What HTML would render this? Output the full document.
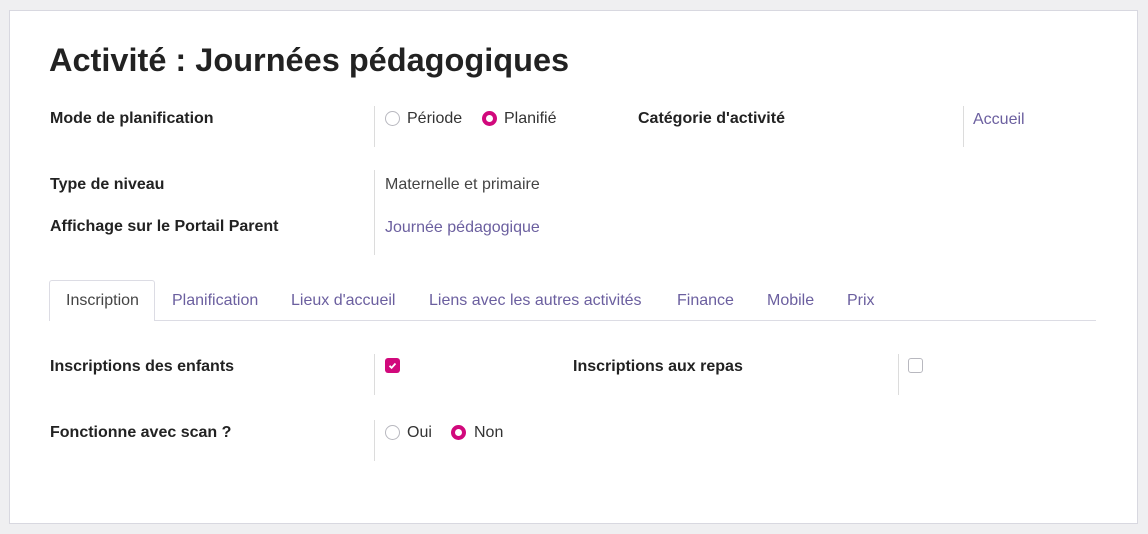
<!DOCTYPE html>
<html><head><meta charset="utf-8"><style>
*{margin:0;padding:0;box-sizing:border-box}
body{width:1148px;height:534px;background:#efeff1;font-family:"Liberation Sans",sans-serif;position:relative;overflow:hidden;color:#222}
.card{position:absolute;left:9px;top:10px;width:1129px;height:514px;background:#fff;border:1px solid #d8d8e0}
.a{position:absolute;white-space:nowrap}
.t{font-size:32.5px;font-weight:bold;color:#222}
.l{font-size:16px;font-weight:bold;color:#222}
.v{font-size:16px;color:#444}
.lk{font-size:16px;color:#6b5f9f}
.sep{position:absolute;width:1px;background:#dcdcdc}
.r{position:absolute;width:15px;height:15px;border-radius:50%;border:1px solid #b8b8bf;background:#fff}
.r.on{border:4px solid #d1097c}
.tab{font-size:16px;color:#6b5f9f}
</style></head><body>
<div class="card"></div>
<div class="a t" style="left:49px;top:42px">Activité : Journées pédagogiques</div>

<div class="a l" style="left:50px;top:110px">Mode de planification</div>
<div class="sep" style="left:374px;top:106px;height:41px"></div>
<div class="r" style="left:385px;top:111px"></div>
<div class="a v" style="left:407px;top:110px;color:#333">Période</div>
<div class="r on" style="left:482px;top:111px"></div>
<div class="a v" style="left:504px;top:110px;color:#333">Planifié</div>
<div class="a l" style="left:638px;top:110px">Catégorie d'activité</div>
<div class="sep" style="left:963px;top:106px;height:41px"></div>
<div class="a lk" style="left:973px;top:111px">Accueil</div>

<div class="a l" style="left:50px;top:176px">Type de niveau</div>
<div class="sep" style="left:374px;top:170px;height:85px"></div>
<div class="a v" style="left:385px;top:176px">Maternelle et primaire</div>
<div class="a l" style="left:50px;top:218px">Affichage sur le Portail Parent</div>
<div class="a lk" style="left:385px;top:219px">Journée pédagogique</div>

<div style="position:absolute;left:49px;top:320px;width:1047px;height:1px;background:#dcdce4"></div>
<div style="position:absolute;left:49px;top:280px;width:106px;height:41px;background:#fff;border:1px solid #dcdce4;border-bottom:none;border-radius:3px 3px 0 0"></div>
<div class="a tab" style="left:66px;top:292px;color:#444">Inscription</div>
<div class="a tab" style="left:172px;top:292px">Planification</div>
<div class="a tab" style="left:291px;top:292px">Lieux d'accueil</div>
<div class="a tab" style="left:429px;top:292px">Liens avec les autres activités</div>
<div class="a tab" style="left:677px;top:292px">Finance</div>
<div class="a tab" style="left:767px;top:292px">Mobile</div>
<div class="a tab" style="left:847px;top:292px">Prix</div>

<div class="a l" style="left:50px;top:358px">Inscriptions des enfants</div>
<div class="sep" style="left:374px;top:354px;height:41px"></div>
<div style="position:absolute;left:385px;top:358px;width:15px;height:15px;border-radius:3px;background:#d1097c"></div>
<svg class="a" style="left:385px;top:358px" width="15" height="15"><path d="M4.5 7.8 L6.6 9.8 L10.5 5.5" stroke="#fff" stroke-width="1.8" fill="none"/></svg>
<div class="a l" style="left:573px;top:358px">Inscriptions aux repas</div>
<div class="sep" style="left:898px;top:354px;height:41px"></div>
<div style="position:absolute;left:908px;top:358px;width:15px;height:15px;border-radius:3px;border:1px solid #b8b8bf"></div>

<div class="a l" style="left:50px;top:424px">Fonctionne avec scan ?</div>
<div class="sep" style="left:374px;top:420px;height:41px"></div>
<div class="r" style="left:385px;top:425px"></div>
<div class="a v" style="left:407px;top:424px;color:#333">Oui</div>
<div class="r on" style="left:451px;top:425px"></div>
<div class="a v" style="left:474px;top:424px;color:#333">Non</div>
</body></html>
